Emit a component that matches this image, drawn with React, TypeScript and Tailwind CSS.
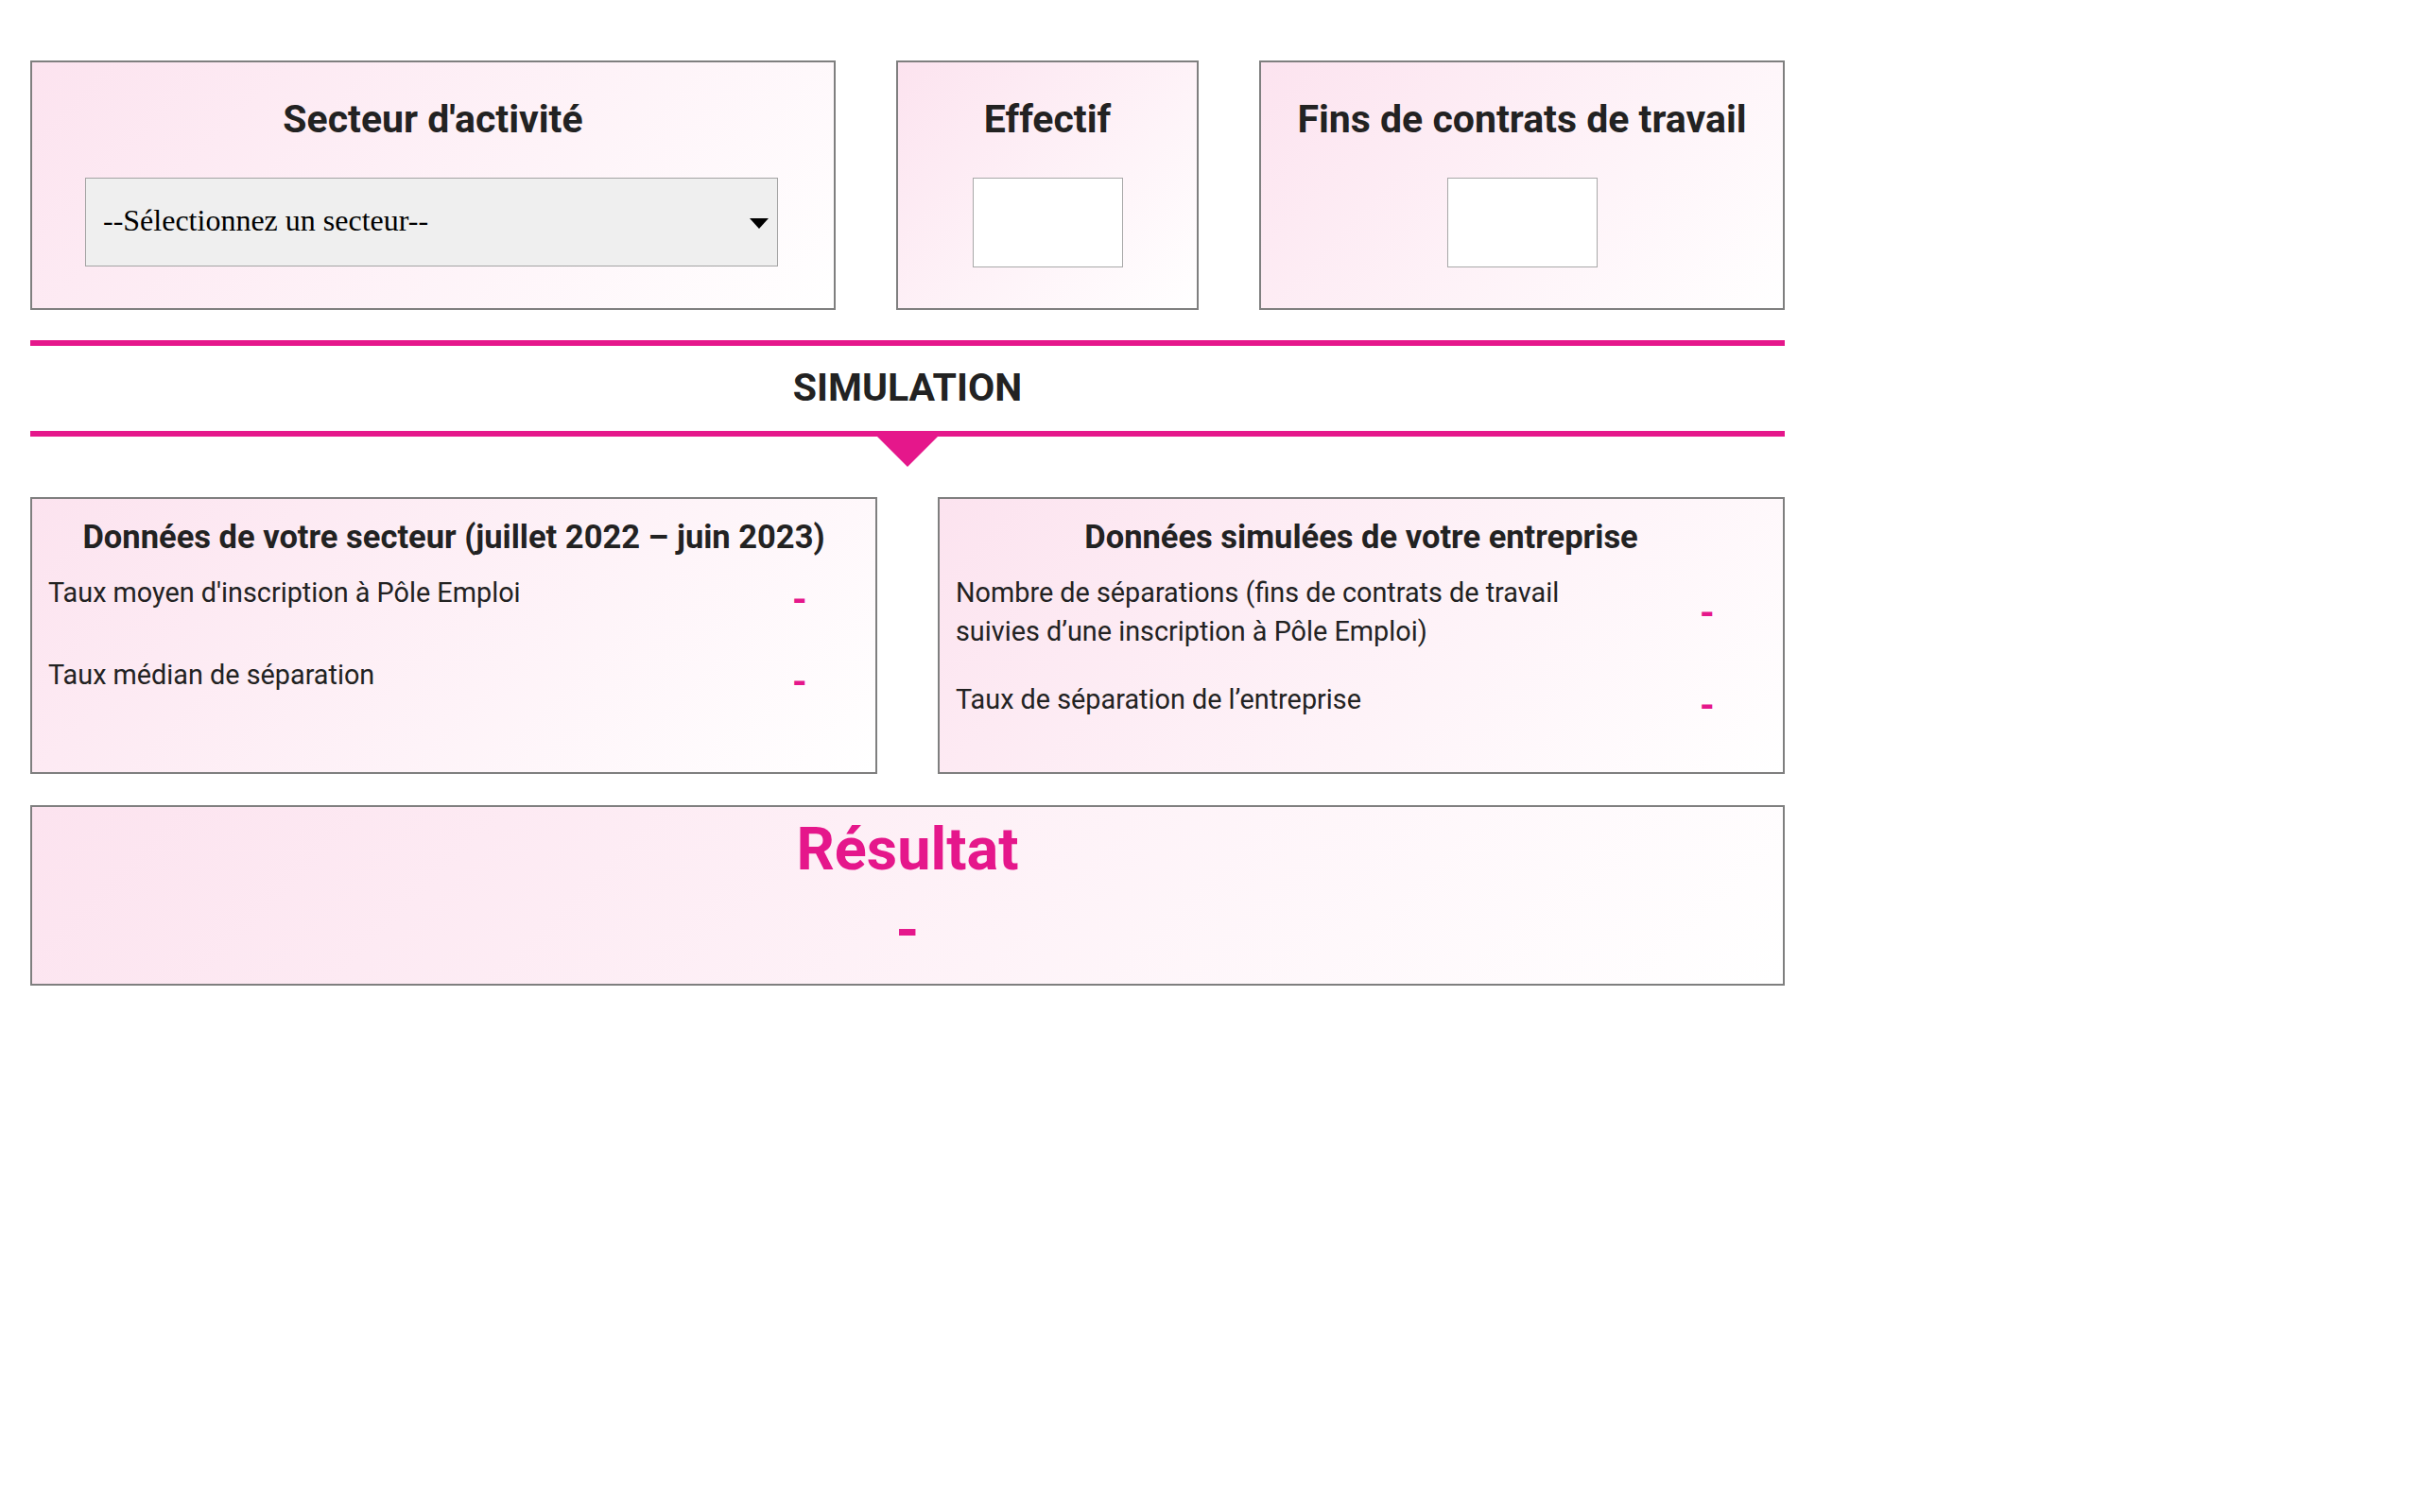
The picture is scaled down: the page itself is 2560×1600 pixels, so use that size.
export default function App() {
  const pink = 'text-[#e5178b]';
  const card = 'border-2 border-[#7f7f7f] bg-linear-135 from-[#fce3ef] to-white';

  return (
    <div className="min-h-screen bg-white font-['Roboto','Liberation_Sans',sans-serif] text-[#222222]">
      <div className="ml-[32px] w-[1856px] pt-[64px]">
        {/* top inputs */}
        <div className="flex h-[264px] gap-[64px]">
          <div className={`flex w-[852px] flex-col items-center pt-[36px] ${card}`}>
            <h2 className="text-[41px] leading-[48px] font-bold">Secteur d'activité</h2>
            <div className="relative mt-[38px] mr-[3px] h-[94px] w-[733px]">
              <select className="h-full w-full appearance-none border border-[#a3a3a3] bg-[#efefef] pb-[4px] pl-[18px] font-['Liberation_Serif',serif] text-[32px] text-black outline-none">
                <option>--Sélectionnez un secteur--</option>
              </select>
              <svg className="pointer-events-none absolute top-[43px] right-[10px]" width="20" height="11" viewBox="0 0 20 11">
                <path d="M0 0 L20 0 L10 11 Z" fill="#000" />
              </svg>
            </div>
          </div>

          <div className={`flex w-[320px] flex-col items-center pt-[36px] ${card}`}>
            <h2 className="text-[41px] leading-[48px] font-bold">Effectif</h2>
            <input type="text" className="mt-[38px] h-[95px] w-[159px] border border-[#a8a8a8] bg-white outline-none" />
          </div>

          <div className={`flex flex-1 flex-col items-center pt-[36px] ${card}`}>
            <h2 className="text-[41px] leading-[48px] font-bold">Fins de contrats de travail</h2>
            <input type="text" className="mt-[38px] h-[95px] w-[159px] border border-[#a8a8a8] bg-white outline-none" />
          </div>
        </div>

        {/* simulation band */}
        <div className="relative mt-[32px] flex h-[102px] items-center justify-center border-y-[6px] border-[#e5178b] pb-[3px]">
          <h3 className="text-[41px] leading-[48px] font-bold">SIMULATION</h3>
          <svg className="absolute top-[calc(100%+6px)] left-1/2 -translate-x-1/2" width="64" height="32" viewBox="0 0 64 32">
            <path d="M0 0 L64 0 L32 32 Z" fill="#e5178b" />
          </svg>
        </div>

        {/* sector + company data */}
        <div className="mt-[64px] flex h-[293px] gap-[64px]">
          <div className={`w-[896px] pt-[20px] pl-[17px] ${card}`}>
            <h3 className="pr-[17px] text-center text-[34.5px] leading-[40px] font-bold">
              Données de votre secteur (juillet 2022 – juin 2023)
            </h3>
            <div className="mt-[19px] flex items-start">
              <p className="w-[715px] text-[28.8px] leading-[41px]">Taux moyen d'inscription à Pôle Emploi</p>
              <span className={`mt-[7px] w-[160px] text-center text-[40px] leading-[41px] font-bold ${pink}`}>-</span>
            </div>
            <div className="mt-[39px] flex items-start">
              <p className="w-[715px] text-[28.8px] leading-[41px]">Taux médian de séparation</p>
              <span className={`mt-[7px] w-[160px] text-center text-[40px] leading-[41px] font-bold ${pink}`}>-</span>
            </div>
          </div>

          <div className={`w-[896px] pt-[20px] pl-[17px] ${card}`}>
            <h3 className="pr-[17px] text-center text-[34.5px] leading-[40px] font-bold">
              Données simulées de votre entreprise
            </h3>
            <div className="mt-[19px] flex items-center">
              <p className="w-[715px] text-[28.8px] leading-[41px]">
                Nombre de séparations (fins de contrats de travail suivies d’une inscription à Pôle Emploi)
              </p>
              <span className={`w-[160px] text-center text-[40px] leading-[41px] font-bold ${pink}`}>-</span>
            </div>
            <div className="mt-[31px] flex items-start">
              <p className="w-[715px] text-[28.8px] leading-[41px]">Taux de séparation de l’entreprise</p>
              <span className={`mt-[6px] w-[160px] text-center text-[40px] leading-[41px] font-bold ${pink}`}>-</span>
            </div>
          </div>
        </div>

        {/* result */}
        <div className={`mt-[33px] flex h-[191px] flex-col items-center pt-[9px] ${card}`}>
          <h2 className={`text-[63px] leading-[72px] font-bold ${pink}`}>Résultat</h2>
          <span className={`mt-[14px] text-[63px] leading-[72px] font-bold ${pink}`}>-</span>
        </div>
      </div>
    </div>
  );
}
